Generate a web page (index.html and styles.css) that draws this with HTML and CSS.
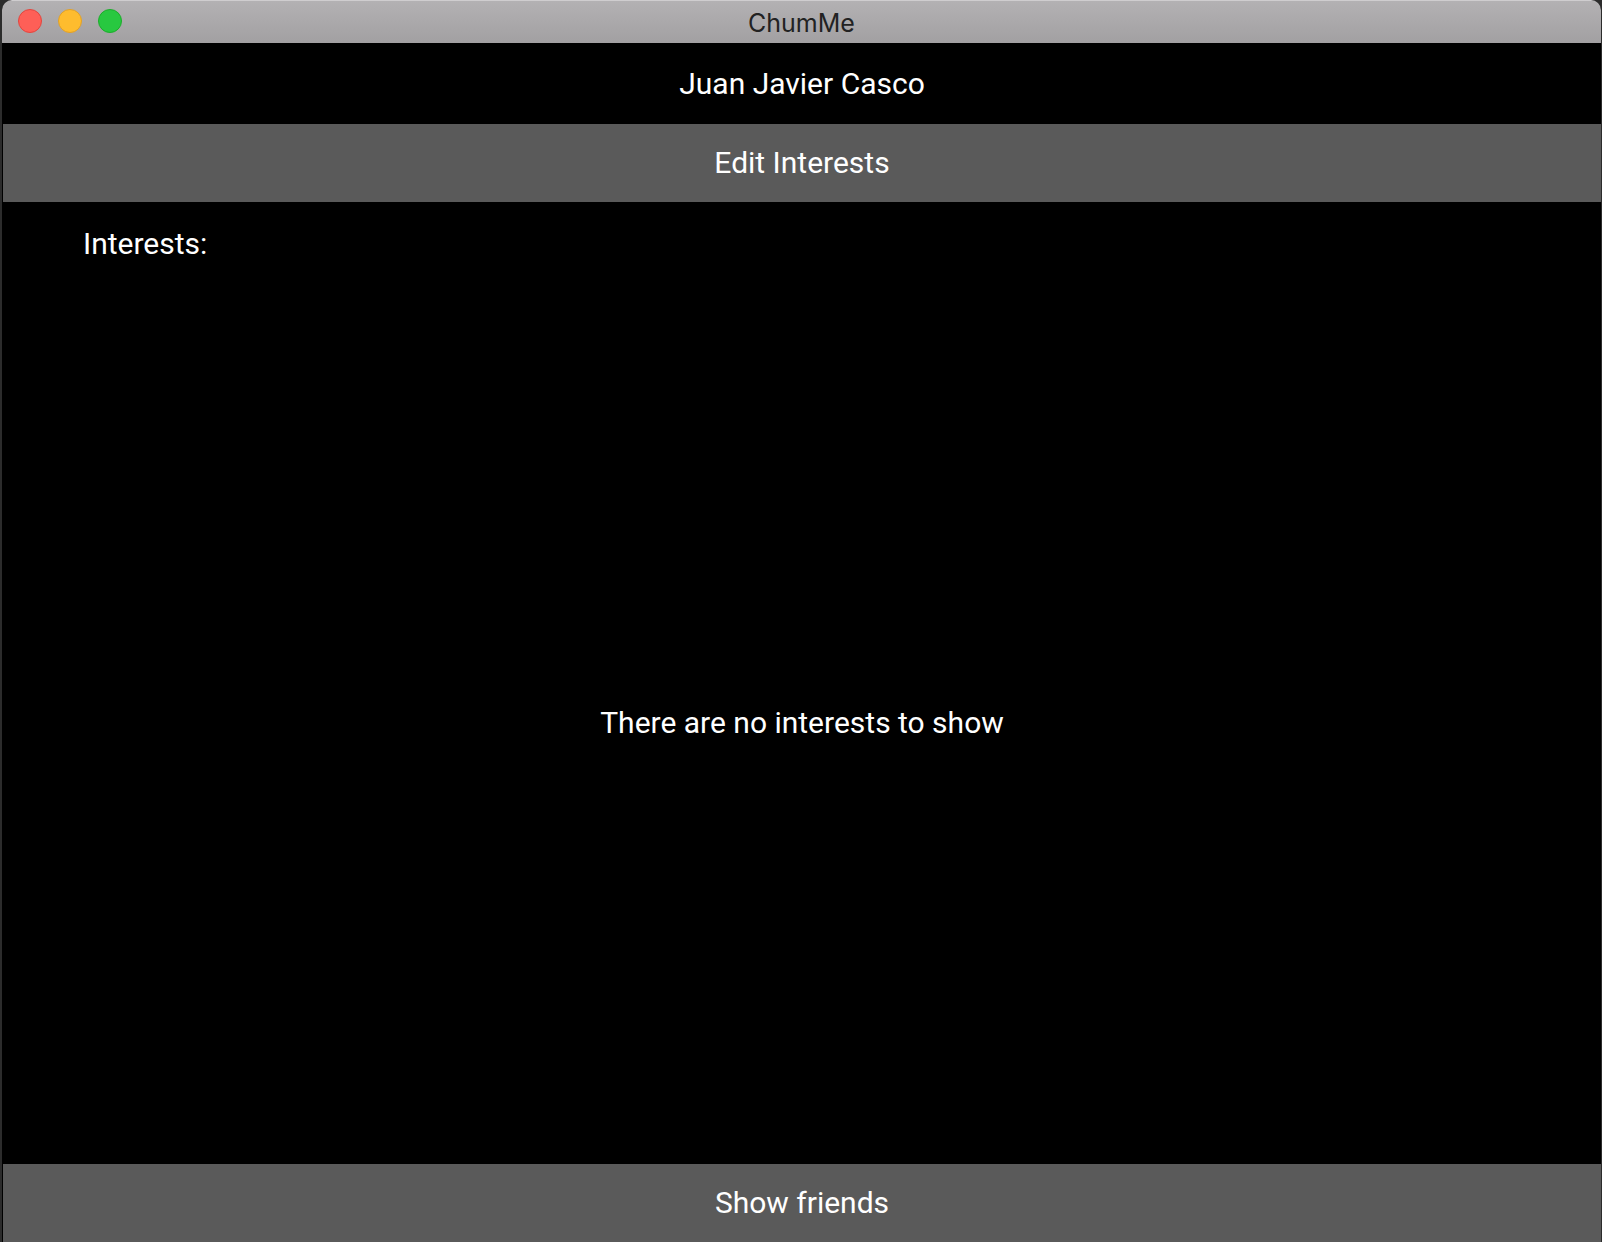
FILE: index.html
```html
<!DOCTYPE html>
<html>
<head>
<meta charset="utf-8">
<title>ChumMe</title>
<link rel="stylesheet" href="styles.css">
</head>
<body>
<div class="window">
  <div class="titlebar">
    <div class="lights">
      <span class="light red"></span>
      <span class="light yellow"></span>
      <span class="light green"></span>
    </div>
    <div class="title">ChumMe</div>
  </div>
  <div class="content">
    <div class="name">Juan Javier Casco</div>
    <div class="btn">Edit Interests</div>
    <div class="label">Interests:</div>
    <div class="empty">There are no interests to show</div>
    <div class="btn">Show friends</div>
  </div>
</div>
</body>
</html>
```
FILE: styles.css
```css
html, body {
  margin: 0;
  padding: 0;
  height: 100%;
  overflow: hidden;
}
body {
  background: #2c2c2c;
}
.window {
  margin: 0 1px 0 2px;
  height: 1242px;
  display: flex;
  flex-direction: column;
  background: #000;
  border-radius: 10px 10px 0 0;
  overflow: hidden;
}
.titlebar {
  position: relative;
  height: 43px;
  flex: none;
  background: linear-gradient(#b3b1b3, #a2a0a2);
  border-top: 1px solid #cfcdcf;
  box-sizing: border-box;
  display: flex;
  align-items: center;
  justify-content: center;
}
.lights {
  position: absolute;
  left: 16px;
  top: 8px;
  display: flex;
  gap: 16px;
}
.light {
  width: 22px;
  height: 22px;
  border-radius: 50%;
  display: block;
}
.red { background: #fe5f57; border: 1px solid #e2463f; }
.yellow { background: #febc2e; border: 1px solid #e0a028; }
.green { background: #28c840; border: 1px solid #1dad2b; }
.title {
  font-family: "Inter", "Liberation Sans", sans-serif;
  font-size: 25px;
  color: #222;
  margin-top: 1px;
}
.content {
  flex: 1;
  display: flex;
  flex-direction: column;
  padding-left: 1px;
  font-family: "Roboto", sans-serif;
  font-size: 30px;
  color: #fff;
}
.name {
  height: 81px;
  line-height: 81px;
  text-align: center;
  flex: none;
}
.btn {
  height: 78px;
  line-height: 78px;
  text-align: center;
  background: #5a5a5a;
  flex: none;
}
.label {
  padding: 24px 0 20px 80px;
  flex: none;
}
.empty {
  flex: 1;
  display: flex;
  align-items: center;
  justify-content: center;
}
```
